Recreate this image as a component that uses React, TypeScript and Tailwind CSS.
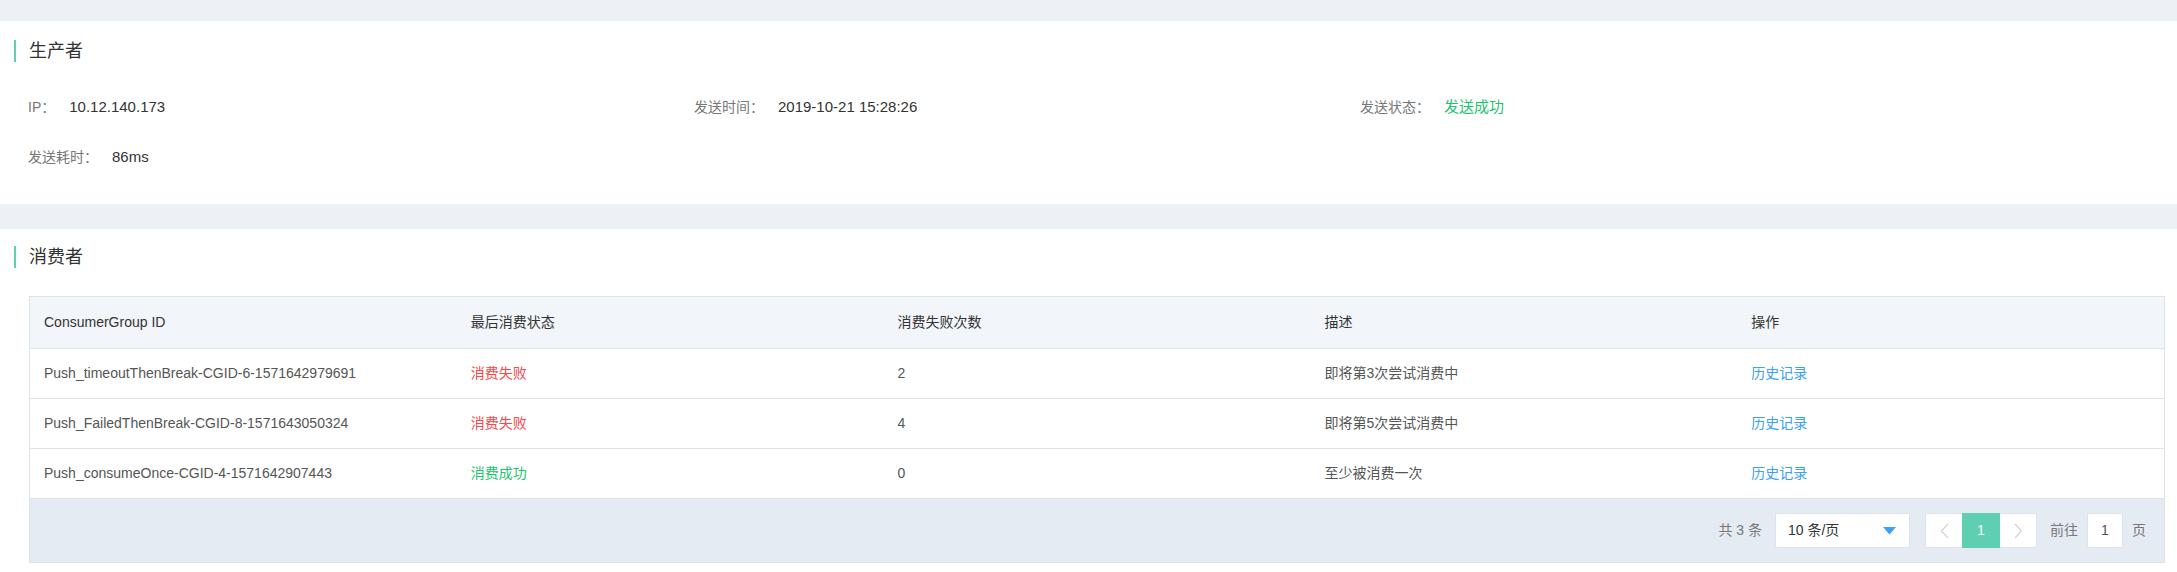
const rows = [
  {
    id: "Push_timeoutThenBreak-CGID-6-1571642979691",
    ok: false,
    count: "2",
    desc: "即将第3次尝试消费中",
  },
  {
    id: "Push_FailedThenBreak-CGID-8-1571643050324",
    ok: false,
    count: "4",
    desc: "即将第5次尝试消费中",
  },
  {
    id: "Push_consumeOnce-CGID-4-1571642907443",
    ok: true,
    count: "0",
    desc: "至少被消费一次",
  },
];

function SectionTitle({ children }: { children: React.ReactNode }) {
  return (
    <div className="flex h-[22px] items-center pl-[14px]">
      <span className="h-[22px] w-[2px] bg-[#5fcfb2]" />
      <span className="ml-[13px] text-[18px] leading-[22px] text-[#333]">{children}</span>
    </div>
  );
}

function Info({ label, value, valueClass }: { label: string; value: string; valueClass?: string }) {
  return (
    <div className="flex w-[666px] items-center text-[14px] leading-[20px]">
      <span className="text-[#777]">{label}</span>
      <span className={`ml-[14px] text-[15px] ${valueClass ?? "text-[#333]"}`}>{value}</span>
    </div>
  );
}

export default function App() {
  return (
    <div className="min-h-[572px] bg-white font-['Liberation_Sans','Noto_Sans_CJK_SC',sans-serif]">
      <div className="h-[21px] bg-[#edf1f5]" />

      <section className="bg-white pt-[19px] pb-[37px]">
        <SectionTitle>生产者</SectionTitle>
        <div className="mt-[35px] flex pl-[28px]">
          <Info label="IP：" value="10.12.140.173" />
          <Info label="发送时间：" value="2019-10-21 15:28:26" />
          <Info label="发送状态：" value="发送成功" valueClass="text-[14px] text-[#1fc36f]" />
        </div>
        <div className="mt-[30px] flex pl-[28px]">
          <Info label="发送耗时：" value="86ms" />
        </div>
      </section>

      <div className="h-[25px] bg-[#edf1f5]" />

      <section className="bg-white pt-[17px] pb-[10px]">
        <SectionTitle>消费者</SectionTitle>

        <div className="mt-[28px] ml-[29px] mr-[12px] border border-[#dce3ea] text-[14px]">
          <div className="grid h-[51px] grid-cols-5 items-center bg-[#f2f5f9] text-[#333]">
            <div className="pl-[14px]">ConsumerGroup ID</div>
            <div className="pl-[14px]">最后消费状态</div>
            <div className="pl-[14px]">消费失败次数</div>
            <div className="pl-[14px]">描述</div>
            <div className="pl-[14px]">操作</div>
          </div>
          {rows.map((r) => (
            <div
              key={r.id}
              className="grid h-[50px] grid-cols-5 items-center border-t border-[#dce3ea] bg-white text-[#555]"
            >
              <div className="pl-[14px]">{r.id}</div>
              <div className={`pl-[14px] ${r.ok ? "text-[#1fc36f]" : "text-[#f5484b]"}`}>
                {r.ok ? "消费成功" : "消费失败"}
              </div>
              <div className="pl-[14px]">{r.count}</div>
              <div className="pl-[14px]">{r.desc}</div>
              <div className="pl-[14px] text-[#3aa1f4]">历史记录</div>
            </div>
          ))}

          <div className="flex h-[64px] items-center justify-end border-t border-[#dce3ea] bg-[#e5ebf2] pr-[18px] text-[#777]">
            <span>共 3 条</span>
            <div className="ml-[13px] flex h-[35px] w-[135px] items-center justify-between rounded-[2px] border border-[#dce3ea] bg-white pl-[12px] pr-[13px] text-[#333]">
              <span>10 条/页</span>
              <svg width="13" height="8" viewBox="0 0 13 8">
                <polygon points="0,0 13,0 6.5,7.5" fill="#3aa1f4" />
              </svg>
            </div>
            <div className="ml-[15px] flex h-[35px] items-stretch rounded-[2px] border border-[#dce3ea] bg-white">
              <div className="flex w-[36px] items-center justify-center">
                <svg width="9" height="16" viewBox="0 0 9 16">
                  <polyline points="8,1 1.5,8 8,15" fill="none" stroke="#d4d8dd" strokeWidth="1.5" />
                </svg>
              </div>
              <div className="my-[-1px] flex w-[38px] items-center justify-center bg-[#5fcfb2] text-white">1</div>
              <div className="flex w-[36px] items-center justify-center">
                <svg width="9" height="16" viewBox="0 0 9 16">
                  <polyline points="1,1 7.5,8 1,15" fill="none" stroke="#d4d8dd" strokeWidth="1.5" />
                </svg>
              </div>
            </div>
            <span className="ml-[13px]">前往</span>
            <div className="ml-[9px] flex h-[35px] w-[36px] items-center justify-center rounded-[2px] border border-[#dce3ea] bg-white text-[#555]">
              1
            </div>
            <span className="ml-[9px]">页</span>
          </div>
        </div>
      </section>
    </div>
  );
}
